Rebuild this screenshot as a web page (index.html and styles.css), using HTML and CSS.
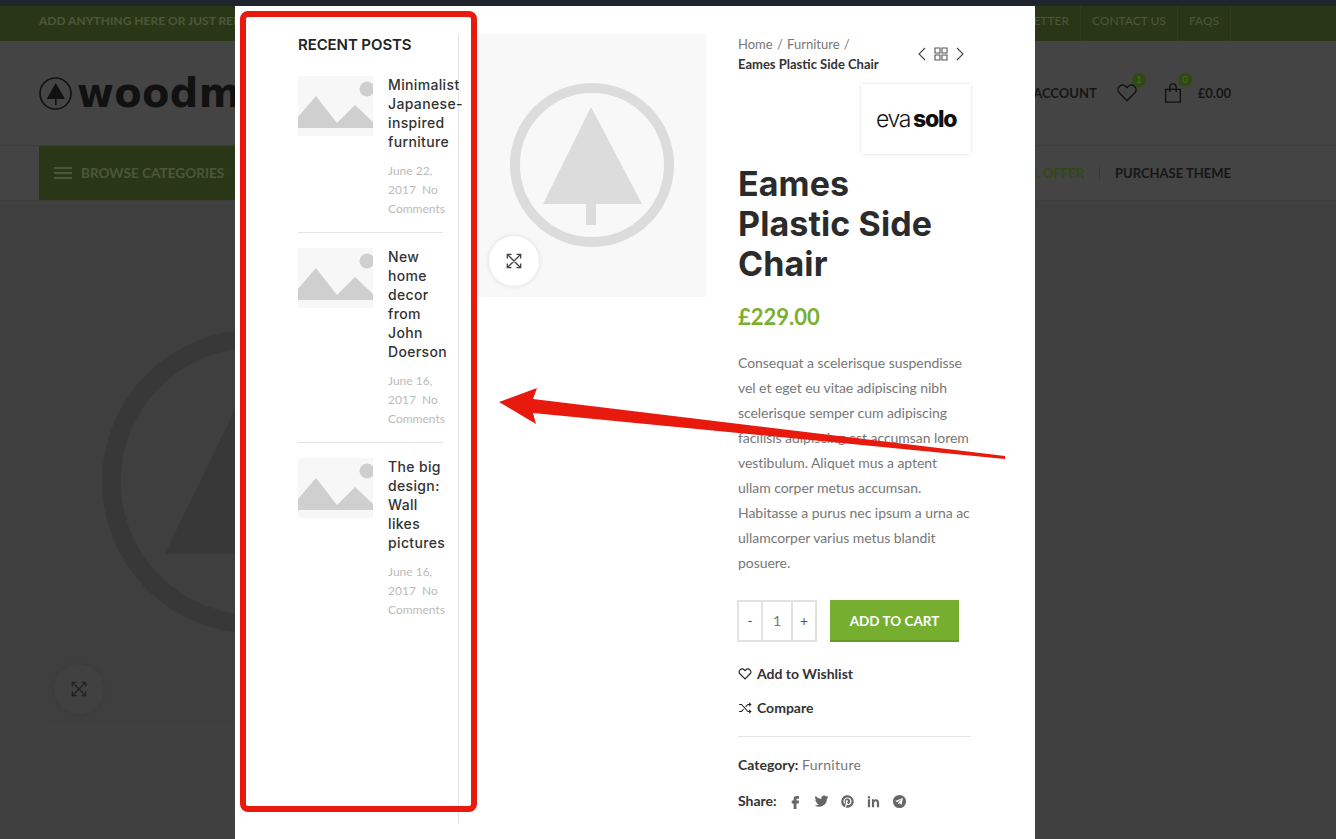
FILE: index.html
```html
<!doctype html>
<html>
	<head>
		<title>Eames Plastic Side Chair</title>
		<link rel="stylesheet" href="styles.css">
	</head>
	<body>
		<!-- dimmed shop page behind the quick view -->
		<div class="page">
			<div class="strip"></div>
			<div class="topbar">
				<span class="topbar-text">ADD ANYTHING HERE OR JUST REMOVE IT...</span>
				<ul class="toplinks">
					<li>NEWSLETTER</li>
					<li>CONTACT US</li>
					<li>FAQS</li>
				</ul>
			</div>
			<div class="header">
				<div class="logo">
					<svg class="logo-icon" viewBox="0 0 33 33">
						<circle cx="16.5" cy="16.5" r="15.500" fill="none" stroke="#111" stroke-width="1.600"/>
						<polygon points="16.8,6 26,22 17.600,22 17.600,28 16,28 16,22 7.700,22" fill="#111"/>
					</svg>
					<span class="logo-text">woodmart</span>
				</div>
				<div class="tools">
					<span class="account">MY ACCOUNT</span>
					<span class="tool">
						<svg class="tool-icon" viewBox="0 0 24 24"><path d="M12 20.5 3.6 12a5.2 5.2 0 0 1 0-7.2 5 5 0 0 1 7.1 0L12 6.1l1.3-1.3a5 5 0 0 1 7.1 0 5.2 5.2 0 0 1 0 7.2z" fill="none" stroke="#111" stroke-width="1.5"/></svg>
						<span class="badge">1</span>
					</span>
					<span class="tool">
						<svg class="tool-icon" viewBox="0 0 24 24"><path d="M4 8h16v14H4zM8.500 11V5.500a3.500 3.500 0 0 1 7 0V11" fill="none" stroke="#111" stroke-width="1.5"/></svg>
						<span class="badge">0</span>
					</span>
					<span class="total">£0.00</span>
				</div>
			</div>
			<div class="nav">
				<div class="browse">
					<span class="burger"><i></i><i></i><i></i></span>
					BROWSE CATEGORIES
				</div>
				<ul class="menu">
					<li class="menu-offer">SPECIAL OFFER</li>
					<li>PURCHASE THEME</li>
				</ul>
			</div>
			<div class="hero">
				<svg class="hero-mark" viewBox="0 0 229 263">
					<circle cx="115" cy="131" r="77" fill="none" stroke="#383838" stroke-width="10"/>
					<polygon points="114,73 165,170 119,170 119,191 109,191 109,170 67,170" fill="#383838"/>
				</svg>
				<span class="zoom-btn zoom-btn-dim">
					<svg viewBox="0 0 24 24"><path d="M4 9V4h5M4 4l16 16M20 15v5h-5M20 9V4h-5M20 4 4 20M4 15v5h5" fill="none" stroke="#222" stroke-width="1.6"/></svg>
				</span>
			</div>
		</div>

		<!-- quick view popup -->
		<div class="modal">
			<aside class="sidebar">
				<h3 class="side-title">RECENT POSTS</h3>
				<div class="post">
					<svg class="thumb" viewBox="0 0 75 60"><rect width="75" height="60" fill="#f7f7f7"/><polygon points="0,41 18,20 39,47 57,29 75,46 75,52 0,52" fill="#cfcfcf"/><circle cx="69" cy="13" r="7.500" fill="#cfcfcf"/></svg>
					<div class="post-body">
						<a class="post-name">Minimalist Japanese-inspired furniture</a>
						<p class="post-meta">June 22, 2017 &nbsp;No Comments</p>
					</div>
				</div>
				<div class="post">
					<svg class="thumb" viewBox="0 0 75 60"><rect width="75" height="60" fill="#f7f7f7"/><polygon points="0,41 18,20 39,47 57,29 75,46 75,52 0,52" fill="#cfcfcf"/><circle cx="69" cy="13" r="7.500" fill="#cfcfcf"/></svg>
					<div class="post-body">
						<a class="post-name">New home decor from John Doerson</a>
						<p class="post-meta">June 16, 2017 &nbsp;No Comments</p>
					</div>
				</div>
				<div class="post">
					<svg class="thumb" viewBox="0 0 75 60"><rect width="75" height="60" fill="#f7f7f7"/><polygon points="0,41 18,20 39,47 57,29 75,46 75,52 0,52" fill="#cfcfcf"/><circle cx="69" cy="13" r="7.500" fill="#cfcfcf"/></svg>
					<div class="post-body">
						<a class="post-name">The big design: Wall likes pictures</a>
						<p class="post-meta">June 16, 2017 &nbsp;No Comments</p>
					</div>
				</div>
			</aside>

			<div class="gallery">
				<svg class="gallery-mark" viewBox="0 0 229 263">
					<rect width="229" height="263" fill="#f8f8f8"/>
					<circle cx="115" cy="131" r="77" fill="none" stroke="#dcdcdc" stroke-width="10"/>
					<polygon points="114,73 165,170 119,170 119,191 109,191 109,170 66,170" fill="#dcdcdc"/>
				</svg>
				<span class="zoom-btn">
					<svg viewBox="0 0 24 24"><path d="M4 9V4h5M4 4l16 16M20 15v5h-5M20 9V4h-5M20 4 4 20M4 15v5h5" fill="none" stroke="#444" stroke-width="1.6"/></svg>
				</span>
			</div>

			<div class="summary">
				<div class="crumbs-row">
					<div class="crumbs">
						<span>Home&nbsp; /&nbsp; Furniture&nbsp; /</span>
						<b>Eames Plastic Side Chair</b>
					</div>
					<div class="pager">
						<svg viewBox="0 0 12 16"><path d="M9 2 3 8l6 6" fill="none" stroke="#444" stroke-width="1.100"/></svg>
						<svg viewBox="0 0 16 16"><path d="M2 2h5v5H2zM9 2h5v5H9zM2 9h5v5H2zM9 9h5v5H9z" fill="none" stroke="#555" stroke-width="1.100"/></svg>
						<svg viewBox="0 0 12 16"><path d="m3 2 6 6-6 6" fill="none" stroke="#444" stroke-width="1.100"/></svg>
					</div>
				</div>
				<div class="brand-row">
					<div class="brand"><span class="brand-light">eva</span><span class="brand-bold">solo</span></div>
				</div>
				<h1 class="title">Eames Plastic Side Chair</h1>
				<div class="price">£229.00</div>
				<p class="desc">Consequat a scelerisque suspendisse vel et eget eu vitae adipiscing nibh scelerisque semper cum adipiscing facilisis adipiscing est accumsan lorem vestibulum. Aliquet mus a aptent ullam corper metus accumsan. Habitasse a purus nec ipsum a urna ac ullamcorper varius metus blandit posuere.</p>
				<div class="cart-row">
					<div class="qty">
						<span class="qty-btn">-</span>
						<span class="qty-num">1</span>
						<span class="qty-btn">+</span>
					</div>
					<button class="add-btn">ADD TO CART</button>
				</div>
				<div class="action action-first">
					<svg viewBox="0 0 24 24"><path d="M12 20.500 3.600 12a5.200 5.200 0 0 1 0-7.200 5 5 0 0 1 7.100 0L12 6.100l1.300-1.300a5 5 0 0 1 7.100 0 5.200 5.200 0 0 1 0 7.200z" fill="none" stroke="#222" stroke-width="2"/></svg>
					Add to Wishlist
				</div>
				<div class="action">
					<svg viewBox="0 0 24 24"><path d="M2 6h4l11 12h5M2 18h4l3.500-4M13 10l4-4h5M19 3l3 3-3 3M19 15l3 3-3 3" fill="none" stroke="#222" stroke-width="1.800"/></svg>
					Compare
				</div>
				<div class="meta-line"><b>Category:</b> <span class="meta-value">Furniture</span></div>
				<div class="share">
					<b>Share:</b>
					<svg viewBox="0 0 24 24"><path d="M14.500 7.500h3V3h-3.500C11 3 9 5 9 8v2.500H6V15h3v9h4.500v-9h3.500l.8-4.500h-4.300V8.500c0-.6.400-1 1-1z"/></svg>
					<svg viewBox="0 0 24 24"><path d="M23 4.500a9 9 0 0 1-2.600.7 4.500 4.500 0 0 0 2-2.500 9 9 0 0 1-2.900 1.100 4.500 4.500 0 0 0-7.700 4.100A12.800 12.800 0 0 1 2.500 3.200a4.500 4.500 0 0 0 1.400 6 4.500 4.500 0 0 1-2-.6c0 2.200 1.500 4.100 3.600 4.500a4.500 4.500 0 0 1-2 .1 4.500 4.500 0 0 0 4.200 3.100A9 9 0 0 1 1 18.200 12.800 12.800 0 0 0 20.700 7.400 9 9 0 0 0 23 4.500z"/></svg>
					<svg viewBox="0 0 24 24"><path d="M12 2a10 10 0 0 0-3.600 19.300c-.1-.8-.2-2 0-2.900l1.200-5s-.3-.6-.3-1.500c0-1.400.8-2.400 1.800-2.400.9 0 1.300.6 1.300 1.400 0 .9-.5 2.100-.8 3.300-.2 1 .5 1.800 1.500 1.800 1.800 0 3.100-1.900 3.100-4.600 0-2.400-1.700-4.100-4.200-4.100-2.900 0-4.600 2.100-4.600 4.400 0 .9.300 1.800.8 2.300l.1.300-.3 1.200c0 .2-.2.2-.4.1-1.200-.6-2-2.400-2-3.900 0-3.200 2.300-6.100 6.600-6.100 3.500 0 6.200 2.500 6.200 5.800 0 3.500-2.200 6.300-5.200 6.300-1 0-2-.5-2.300-1.100l-.6 2.400c-.2.900-.8 2-1.200 2.600A10 10 0 1 0 12 2z"/></svg>
					<svg viewBox="0 0 24 24"><path d="M6.500 8.500H3V21h3.500zM4.750 3a2 2 0 1 0 0 4 2 2 0 0 0 0-4zM21 14c0-3.500-1.800-5.800-4.800-5.800-1.600 0-2.800.8-3.400 1.800V8.500H9.500V21H13v-6.500c0-1.800.8-3 2.400-3s2.100 1.200 2.100 3V21H21z"/></svg>
					<svg viewBox="0 0 24 24"><path fill-rule="evenodd" d="M12 1.500a10.500 10.500 0 1 0 0 21 10.500 10.500 0 0 0 0-21zM17.300 7.500l-1.800 8.700c-.1.600-.5.700-1 .4l-2.700-2-1.300 1.300c-.2.100-.3.300-.6.300l.2-2.800 5-4.600c.2-.2 0-.3-.3-.1l-6.200 3.900-2.700-.8c-.6-.2-.6-.6.100-.9l10.400-4c.5-.2.900.1.900.6z"/></svg>
				</div>
			</div>
		</div>

		<!-- red markup drawn on the screenshot -->
		<div class="mark-box"></div>
		<svg class="mark-arrow" viewBox="0 0 1336 839">
			<polygon points="499,402 537,388 533,399 1005,456 1005,459 533,413 536,424" fill="#e8190d"/>
		</svg>
	</body>
</html>
```

FILE: styles.css
```css
* {
	margin: 0px;
	padding: 0px;
	box-sizing: border-box;
}
html, body {
	height: 839px;
	overflow: hidden;
}
body {
	position: relative;
	background: #404040;
	font-family: "Lato", "Liberation Sans", sans-serif;
	font-size: 14px;
	color: #777;
}
ul {
	list-style-type: none;
}

/* page behind the popup */
.strip {
	height: 6px;
	background: #1f252d;
}
.topbar {
	height: 35px;
	padding: 0 105px 0 39px;
	display: flex;
	align-items: center;
	justify-content: space-between;
	background: #2a3716;
	color: #4b5739;
	font-size: 12px;
	font-weight: 700;
}
.topbar-text {
	padding-bottom: 6px;
}
.toplinks {
	display: flex;
	height: 100%;
	font-weight: 400;
}
.toplinks li {
	display: flex;
	align-items: center;
	padding: 0 11px 6px;
	border-right: 1px solid #303e1b;
}
.header {
	height: 105px;
	padding: 0 105px 0 39px;
	display: flex;
	align-items: center;
	justify-content: space-between;
	background: #444;
	border-bottom: 1px solid #3d3d3d;
}
.logo {
	display: flex;
	align-items: center;
	gap: 5px;
	color: #111;
}
.logo-icon {
	width: 33px;
	height: 33px;
}
.logo-text {
	font-family: "DejaVu Sans", sans-serif;
	font-size: 40px;
	font-weight: 700;
	letter-spacing: 0.3px;
	line-height: 50px;
}
.tools {
	display: flex;
	align-items: center;
	margin-top: -1px;
	color: #161616;
	font-size: 13px;
	font-weight: 700;
}
.account {
	margin-right: 19px;
}
.tool {
	position: relative;
	display: flex;
	margin-right: 24px;
}
.tool + .tool {
	margin-right: 14px;
}
.tool-icon {
	width: 22px;
	height: 22px;
}
.badge {
	position: absolute;
	top: -9px;
	right: -8px;
	width: 14px;
	height: 14px;
	border-radius: 50%;
	background: #2f4a12;
	color: #4e6a2c;
	font-size: 9px;
	font-weight: 400;
	line-height: 14px;
	text-align: center;
}
.nav {
	height: 55px;
	padding: 0 105px 0 39px;
	display: flex;
	align-items: center;
	justify-content: space-between;
	background: #444;
	border-bottom: 1px solid #3d3d3d;
	font-size: 13px;
	font-weight: 700;
}
.browse {
	width: 230px;
	height: 100%;
	padding-left: 15px;
	display: flex;
	align-items: center;
	gap: 9px;
	background: #2a3716;
	color: #4b5739;
	font-size: 13.6px;
}
.burger i {
	display: block;
	width: 18px;
	height: 2px;
	margin: 3px 0;
	background: #4b5739;
}
.menu {
	display: flex;
	align-items: center;
	color: #161616;
}
.menu li {
	padding-left: 15px;
}
.menu-offer {
	padding-right: 15px;
	border-right: 1px solid #3a3a3a;
	color: #2f4a12;
}
.hero {
	position: relative;
	width: 424px;
	height: 487px;
	margin: 38px 0 0 41px;
	background: #3f3f3f;
}
.hero-mark {
	display: block;
	width: 100%;
	height: 100%;
}
.zoom-btn {
	position: absolute;
	left: 12px;
	bottom: 11px;
	width: 50px;
	height: 50px;
	padding: 15px;
	border-radius: 50%;
	background: #fff;
	box-shadow: 0 0 5px rgba(0, 0, 0, 0.12);
}
.zoom-btn svg {
	display: block;
	width: 20px;
	height: 20px;
}
.zoom-btn-dim {
	left: 13px;
	bottom: 12px;
	background: #414141;
	box-shadow: 0 0 5px rgba(0, 0, 0, 0.08);
}

/* popup */
.modal {
	position: absolute;
	left: 235px;
	top: 6px;
	width: 800px;
	height: 833px;
	padding: 28px 0 0 63px;
	display: flex;
	align-items: flex-start;
	background: #fff;
}
.sidebar {
	width: 161px;
	height: 790px;
	padding-right: 15px;
	border-right: 1px solid #e4e4e4;
	flex-shrink: 0;
}
.side-title {
	font-family: "Inter", sans-serif;
	font-size: 15px;
	font-weight: 600;
	line-height: 20px;
	letter-spacing: -0.1px;
	color: #242424;
	margin: 1px 0 21px;
}
.post {
	display: flex;
	gap: 15px;
	padding-bottom: 13px;
	margin-bottom: 15px;
	border-bottom: 1px solid #e4e4e4;
}
.post:last-child {
	border-bottom: 0;
}
.thumb {
	display: block;
	width: 75px;
	height: 60px;
	flex-shrink: 0;
}
.post-body {
	width: 55px;
	margin-top: -1px;
	margin-bottom: 1px;
}
.post-name {
	display: block;
	font-family: "Inter", sans-serif;
	font-size: 14px;
	font-weight: 500;
	line-height: 19px;
	letter-spacing: 0.35px;
	color: #333;
	margin-bottom: 10px;
}
.post-meta {
	font-size: 12px;
	line-height: 19px;
	color: #bbb;
}
.gallery {
	position: relative;
	width: 229px;
	height: 263px;
	margin-left: 18px;
	flex-shrink: 0;
}
.gallery-mark {
	display: block;
	width: 229px;
	height: 263px;
}
.summary {
	width: 233px;
	margin-left: 32px;
	flex-shrink: 0;
}
.crumbs-row {
	display: flex;
	align-items: center;
	justify-content: space-between;
	padding-right: 5px;
}
.crumbs {
	line-height: 20px;
	font-size: 13px;
}
.crumbs span, .crumbs b {
	display: block;
}
.crumbs span {
	word-spacing: -1.2px;
}
.crumbs b {
	color: #333;
}
.pager {
	display: flex;
	align-items: center;
	gap: 5px;
}
.pager svg {
	display: block;
	width: 12px;
	height: 16px;
}
.pager svg:nth-child(2) {
	width: 16px;
}
.brand-row {
	display: flex;
	justify-content: flex-end;
	margin-top: 10px;
}
.brand {
	width: 110px;
	height: 70px;
	display: flex;
	align-items: center;
	justify-content: center;
	gap: 3px;
	box-shadow: 0 0 3px rgba(0, 0, 0, 0.14);
	font-family: "Inter", sans-serif;
	font-size: 23px;
	letter-spacing: -1.3px;
	color: #111;
}
.brand-light {
	font-weight: 300;
}
.brand-bold {
	font-weight: 800;
}
.title {
	margin-top: 10px;
	padding-right: 20px;
	font-family: "Inter", sans-serif;
	font-size: 34px;
	font-weight: 700;
	line-height: 40px;
	letter-spacing: 0.1px;
	color: #2b2b2b;
}
.price {
	margin-top: 18px;
	font-size: 22px;
	font-weight: 700;
	line-height: 30px;
	color: #7aaf2f;
}
.desc {
	margin-top: 18px;
	line-height: 25px;
	letter-spacing: -0.05px;
}
.cart-row {
	display: flex;
	gap: 13px;
	margin: 25px 0 0 -1px;
}
.qty {
	display: flex;
	height: 42px;
	width: 80px;
	border: 2px solid #e2e2e2;
}
.qty-btn {
	width: 22px;
	text-align: center;
	line-height: 38px;
	color: #555;
}
.qty-num {
	flex: 1;
	text-align: center;
	line-height: 38px;
	border-left: 2px solid #e2e2e2;
	border-right: 2px solid #e2e2e2;
}
.add-btn {
	width: 129px;
	height: 42px;
	padding-top: 2px;
	border: 0;
	border-bottom: 2px solid #66992a;
	background: #76ae2f;
	color: #fff;
	font-family: inherit;
	font-size: 13.5px;
	font-weight: 700;
}
.action {
	display: flex;
	align-items: center;
	gap: 5px;
	margin-top: 14px;
	line-height: 20px;
	color: #333;
	font-weight: 700;
}
.action-first {
	margin-top: 22px;
}
.action svg {
	width: 14px;
	height: 14px;
}
.meta-line {
	margin-top: 18px;
	padding-top: 18px;
	border-top: 1px solid #e4e4e4;
	line-height: 20px;
}
.meta-value {
	letter-spacing: 0.3px;
}
.meta-line b, .share b {
	color: #333;
}
.share {
	display: flex;
	align-items: center;
	gap: 11px;
	margin-top: 16px;
	line-height: 20px;
}
.share svg {
	width: 15px;
	height: 15px;
	fill: #666;
}

/* markup */
.mark-box {
	position: absolute;
	left: 240px;
	top: 11px;
	width: 237px;
	height: 801px;
	border: 6px solid #e8190d;
	border-radius: 8px;
}
.mark-arrow {
	position: absolute;
	left: 0;
	top: 0;
	width: 1336px;
	height: 839px;
}
```
